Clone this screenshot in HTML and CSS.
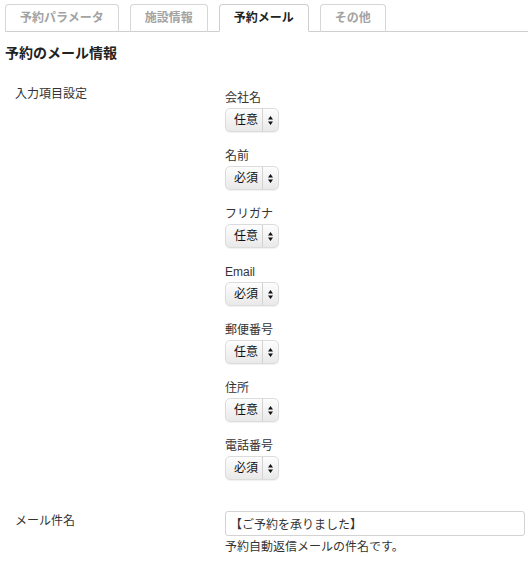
FILE: index.html
```html
<!DOCTYPE html>
<html lang="ja">
<head>
<meta charset="utf-8">
<title>予約のメール情報</title>
<link rel="stylesheet" href="styles.css">
</head>
<body>
<div class="page">
  <ul class="tabs">
    <li class="tab">予約パラメータ</li>
    <li class="tab">施設情報</li>
    <li class="tab active">予約メール</li>
    <li class="tab">その他</li>
  </ul>

  <h2 class="heading">予約のメール情報</h2>

  <div class="row">
    <div class="row-label">入力項目設定</div>
    <div class="row-body fields">
      <div class="field">
        <div class="field-label">会社名</div>
        <div class="select"><span class="select-text">任意</span><span class="select-arrow"><svg width="5" height="9" viewBox="0 0 5 9"><path d="M2.5 0L5 3.4H0z M0 5.6H5L2.5 9z" fill="#111"/></svg></span></div>
      </div>
      <div class="field">
        <div class="field-label">名前</div>
        <div class="select"><span class="select-text">必須</span><span class="select-arrow"><svg width="5" height="9" viewBox="0 0 5 9"><path d="M2.5 0L5 3.4H0z M0 5.6H5L2.5 9z" fill="#111"/></svg></span></div>
      </div>
      <div class="field">
        <div class="field-label">フリガナ</div>
        <div class="select"><span class="select-text">任意</span><span class="select-arrow"><svg width="5" height="9" viewBox="0 0 5 9"><path d="M2.5 0L5 3.4H0z M0 5.6H5L2.5 9z" fill="#111"/></svg></span></div>
      </div>
      <div class="field">
        <div class="field-label">Email</div>
        <div class="select"><span class="select-text">必須</span><span class="select-arrow"><svg width="5" height="9" viewBox="0 0 5 9"><path d="M2.5 0L5 3.4H0z M0 5.6H5L2.5 9z" fill="#111"/></svg></span></div>
      </div>
      <div class="field">
        <div class="field-label">郵便番号</div>
        <div class="select"><span class="select-text">任意</span><span class="select-arrow"><svg width="5" height="9" viewBox="0 0 5 9"><path d="M2.5 0L5 3.4H0z M0 5.6H5L2.5 9z" fill="#111"/></svg></span></div>
      </div>
      <div class="field">
        <div class="field-label">住所</div>
        <div class="select"><span class="select-text">任意</span><span class="select-arrow"><svg width="5" height="9" viewBox="0 0 5 9"><path d="M2.5 0L5 3.4H0z M0 5.6H5L2.5 9z" fill="#111"/></svg></span></div>
      </div>
      <div class="field">
        <div class="field-label">電話番号</div>
        <div class="select"><span class="select-text">必須</span><span class="select-arrow"><svg width="5" height="9" viewBox="0 0 5 9"><path d="M2.5 0L5 3.4H0z M0 5.6H5L2.5 9z" fill="#111"/></svg></span></div>
      </div>
    </div>
  </div>

  <div class="row row-subject">
    <div class="row-label">メール件名</div>
    <div class="row-body">
      <input class="text-input" type="text" value="【ご予約を承りました】">
      <div class="help">予約自動返信メールの件名です。</div>
    </div>
  </div>
</div>
</body>
</html>
```

FILE: styles.css
```css
html, body {
  margin: 0;
  padding: 0;
  background: #fff;
}

body {
  font-family: "Liberation Sans", "Noto Sans CJK JP", sans-serif;
  font-size: 12px;
  color: #333;
}

.page {
  padding: 4px 0 0 5px;
}

.tabs {
  list-style: none;
  margin: 0;
  padding: 0;
  display: flex;
  gap: 11px;
  border-bottom: 1px solid #cfcfcf;
}

.tab {
  margin-bottom: -1px;
  padding: 0 14px;
  height: 26px;
  line-height: 26px;
  border: 1px solid #d6d6d6;
  border-bottom-color: #cfcfcf;
  border-radius: 4px 4px 0 0;
  background: #fff;
  font-weight: bold;
  font-size: 12px;
  color: #a3a3a3;
  white-space: nowrap;
}

.tab.active {
  color: #222;
  border-color: #cfcfcf;
  border-bottom-color: #fff;
}

.heading {
  margin: 12px 0 0;
  font-size: 14px;
  line-height: 18px;
  font-weight: bold;
  color: #222;
}

.row {
  display: grid;
  grid-template-columns: 220px 1fr;
  margin-top: 23px;
}

.row-label {
  padding-left: 10px;
  line-height: 19px;
}

.fields {
  padding-top: 4px;
}

.field {
  margin-bottom: 15px;
}

.field-label {
  line-height: 19px;
}

.select {
  display: inline-flex;
  box-sizing: border-box;
  width: 54px;
  height: 24px;
  border: 1px solid #dcdcdc;
  border-radius: 5px;
  background: linear-gradient(#fdfdfd, #e9e9e9);
  box-shadow: 0 1px 1px rgba(0, 0, 0, 0.06);
  align-items: stretch;
  color: #111;
}

.select-text {
  width: 36px;
  box-sizing: border-box;
  padding-left: 8px;
  line-height: 22px;
  font-size: 12px;
}

.select-arrow {
  flex: 1;
  border-left: 1px solid #d2d2d2;
  display: flex;
  align-items: center;
  justify-content: center;
}

.select-arrow svg {
  display: block;
}

.row-subject {
  margin-top: 16px;
}

.row-subject .row-label {
  padding-top: 1px;
}

.text-input {
  display: block;
  box-sizing: border-box;
  width: 300px;
  height: 25px;
  margin: 0;
  padding: 0 4px;
  border: 1px solid #d3d3d3;
  border-radius: 3px;
  font-family: "Liberation Sans", "Noto Sans CJK JP", sans-serif;
  font-size: 12px;
  color: #333;
  background: #fff;
  outline: none;
}

.help {
  margin-top: 2px;
  line-height: 18px;
}
```
